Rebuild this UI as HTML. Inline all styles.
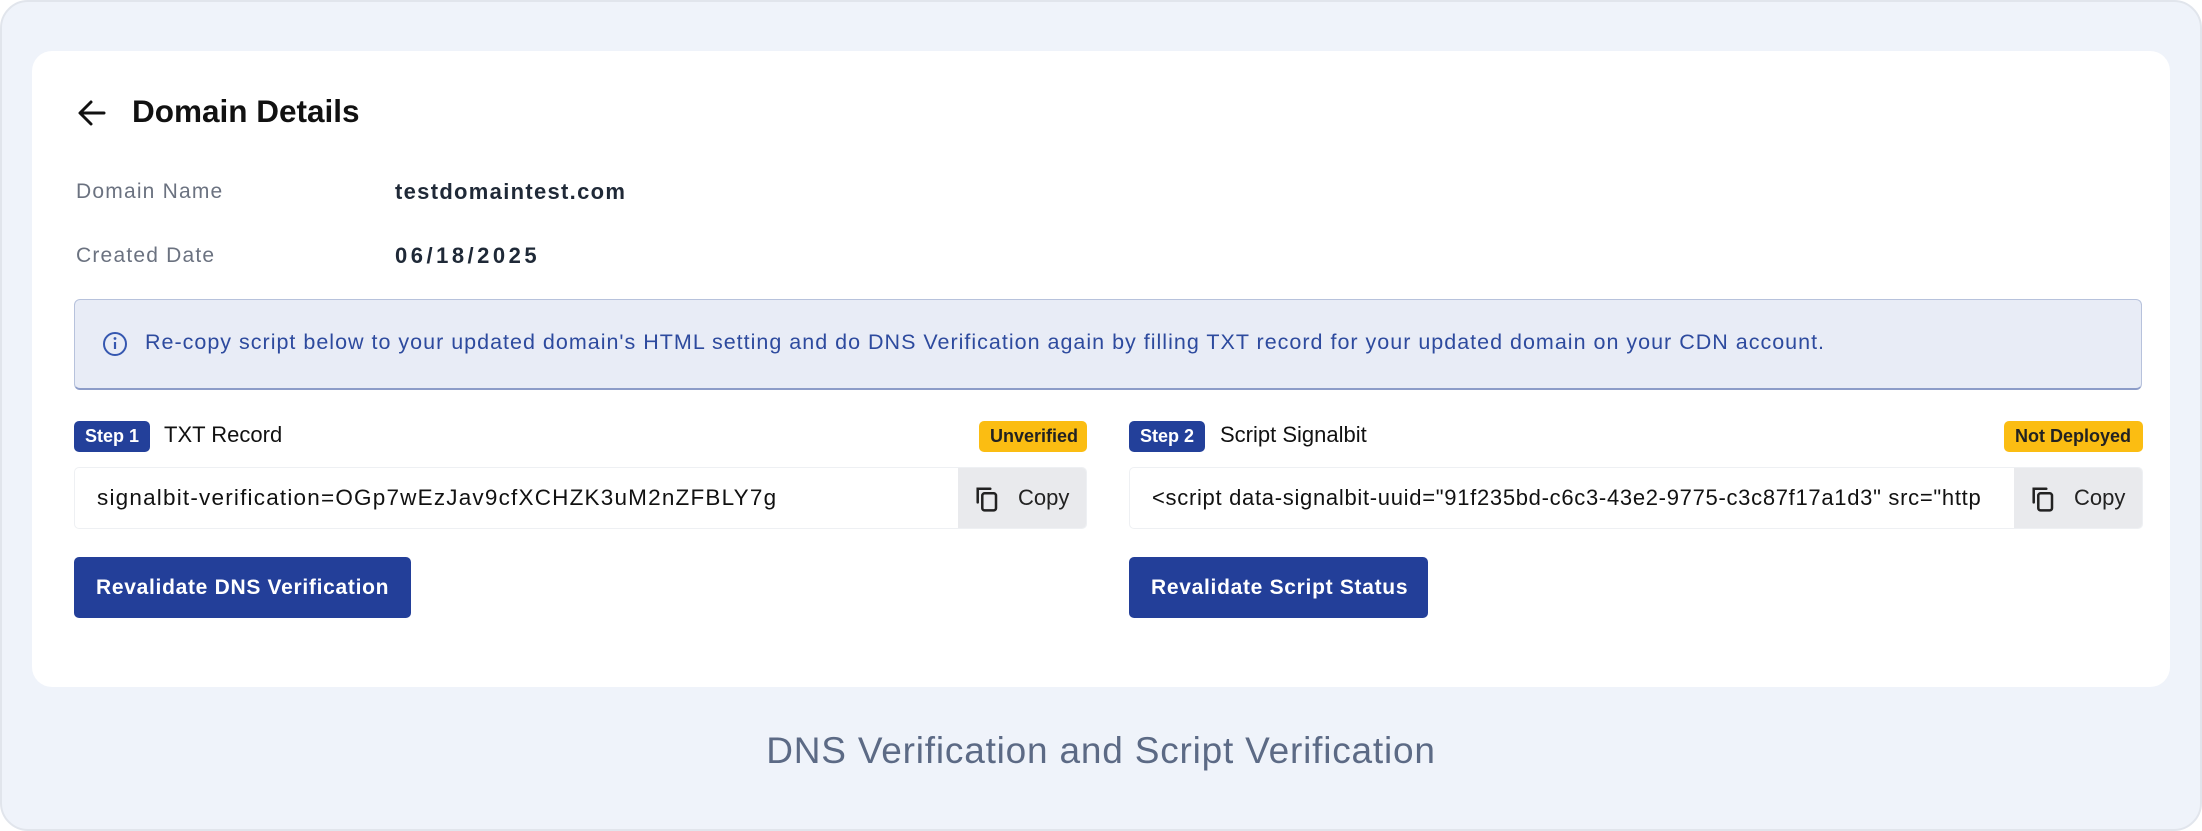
<!DOCTYPE html>
<html><head><meta charset="utf-8"><style>
*{box-sizing:border-box;margin:0;padding:0}
body{width:2202px;height:831px;background:#fff;font-family:"Liberation Sans",sans-serif;position:relative;overflow:hidden}
.frame{position:absolute;left:0;top:0;width:2202px;height:831px;background:#eff3fa;border:2px solid #e1e5ec;border-radius:28px}
.card{position:absolute;left:32px;top:51px;width:2138px;height:636px;background:#fff;border-radius:20px}
.abs{position:absolute;white-space:nowrap}
.lbl{color:#6b7280;font-size:21px;letter-spacing:1.2px}
.val{color:#1f2937;font-size:22px;font-weight:bold}
.info{position:absolute;left:74px;top:299px;width:2068px;height:91px;background:#e8ecf6;border:1px solid #b7c2dc;border-bottom:2px solid #8c9cc8;border-radius:6px}
.badge{position:absolute;height:31px;line-height:31px;border-radius:5px;font-size:18px;font-weight:bold;padding:0 11px}
.step{background:#23409a;color:#fff}
.warn{background:#fbbd12;color:#222}
.inp{position:absolute;height:62px;background:#fff;border:1px solid #eef0f3;border-radius:5px;overflow:hidden}
.inp .t{position:absolute;left:22px;top:0;line-height:60px;font-size:22px;color:#111}
.copy{position:absolute;right:0;top:0;width:128px;height:62px;background:#e9eaed;font-size:22px;color:#222;line-height:60px;padding-left:60px}
.copy svg{position:absolute;left:14px;top:15px}
.btn{position:absolute;top:557px;height:61px;background:#233f99;border-radius:5px;color:#fff;font-weight:bold;font-size:21px;line-height:61px;padding-left:22px;letter-spacing:0.7px}
</style></head><body>
<div class="frame"></div>
<div class="card"></div>
<svg class="abs" style="left:76px;top:97px" width="32" height="32" viewBox="0 0 32 32"><path d="M28 16H5M15 5L4 16l11 11" fill="none" stroke="#111" stroke-width="3" stroke-linecap="round" stroke-linejoin="round"/></svg>
<div class="abs" style="left:132px;top:93px;font-size:31.5px;font-weight:bold;color:#111">Domain Details</div>
<div class="abs lbl" style="left:76px;top:180px">Domain Name</div>
<div class="abs val" style="left:395px;top:179px;letter-spacing:1.3px">testdomaintest.com</div>
<div class="abs lbl" style="left:76px;top:244px">Created Date</div>
<div class="abs val" style="left:395px;top:243px;letter-spacing:3.5px">06/18/2025</div>
<div class="info"></div>
<svg class="abs" style="left:102px;top:331px" width="26" height="26" viewBox="0 0 26 26"><circle cx="13" cy="13" r="11" fill="none" stroke="#3557b0" stroke-width="2"/><path d="M13 11v7" stroke="#3557b0" stroke-width="2.2"/><circle cx="13" cy="7.5" r="1.4" fill="#3557b0"/></svg>
<div class="abs" style="left:145px;top:330px;font-size:21.5px;letter-spacing:1px;color:#2d4a9e">Re-copy script below to your updated domain's HTML setting and do DNS Verification again by filling TXT record for your updated domain on your CDN account.</div>

<div class="badge step" style="left:74px;top:421px">Step 1</div>
<div class="abs" style="left:164px;top:422px;font-size:22px;color:#111">TXT Record</div>
<div class="badge warn" style="left:979px;top:421px;width:108px">Unverified</div>
<div class="inp" style="left:74px;top:467px;width:1013px"><div class="t" style="font-size:22.5px;letter-spacing:1.2px">signalbit-verification=OGp7wEzJav9cfXCHZK3uM2nZFBLY7g</div><div class="copy"><svg width="32" height="32" viewBox="0 0 28 28"><rect x="9" y="9" width="12" height="15" rx="2" fill="none" stroke="#222" stroke-width="2.2"/><path d="M5 17V5h11" fill="none" stroke="#222" stroke-width="2.2" stroke-linecap="round"/></svg>Copy</div></div>
<div class="btn" style="left:74px;width:337px">Revalidate DNS Verification</div>

<div class="badge step" style="left:1129px;top:421px">Step 2</div>
<div class="abs" style="left:1220px;top:422px;font-size:22px;color:#111">Script Signalbit</div>
<div class="badge warn" style="left:2004px;top:421px;width:139px">Not Deployed</div>
<div class="inp" style="left:1129px;top:467px;width:1014px"><div class="t" style="font-size:22px;letter-spacing:0.7px">&lt;script data-signalbit-uuid="91f235bd-c6c3-43e2-9775-c3c87f17a1d3" src="http</div><div class="copy"><svg width="32" height="32" viewBox="0 0 28 28"><rect x="9" y="9" width="12" height="15" rx="2" fill="none" stroke="#222" stroke-width="2.2"/><path d="M5 17V5h11" fill="none" stroke="#222" stroke-width="2.2" stroke-linecap="round"/></svg>Copy</div></div>
<div class="btn" style="left:1129px;width:299px">Revalidate Script Status</div>

<div class="abs" style="left:0;width:2202px;text-align:center;top:730px;font-size:37px;letter-spacing:0.8px;color:#5c6a85">DNS Verification and Script Verification</div>
</body></html>
